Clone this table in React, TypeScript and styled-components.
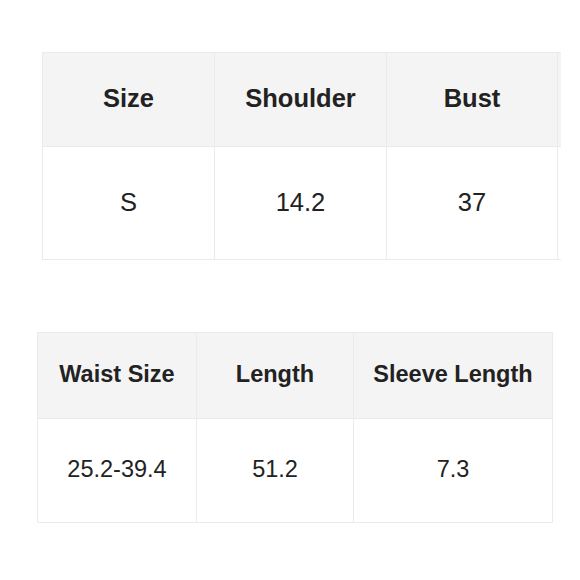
import React from "react";
import styled, { createGlobalStyle } from "styled-components";

type SizeTable = {
  headers: string[];
  values: string[];
  widths: number[];
};

const tables: SizeTable[] = [
  { headers: ["Size", "Shoulder", "Bust", ""], values: ["S", "14.2", "37", ""], widths: [172, 172, 171, 60] },
  { headers: ["Waist Size", "Length", "Sleeve Length"], values: ["25.2-39.4", "51.2", "7.3"], widths: [159, 157, 199] },
];

const GlobalStyle = createGlobalStyle`
  body {
    margin: 0;
    background: #ffffff;
    font-family: "Liberation Sans", Arial, sans-serif;
  }
`;

const Page = styled.div`
  width: 580px;
  height: 580px;
  padding-top: 52px;
  box-sizing: border-box;
  display: flex;
  flex-direction: column;
  gap: 72px;
  overflow: hidden;
`;

const Clip = styled.div<{ $left: number; $width: number }>`
  margin-left: ${(p) => p.$left}px;
  width: ${(p) => p.$width}px;
  overflow: hidden;
`;

const Table = styled.table<{ $size: number }>`
  border-collapse: collapse;
  table-layout: fixed;
  font-size: ${(p) => p.$size}px;
  color: #222222;
`;

const Head = styled.th<{ $h: number }>`
  height: ${(p) => p.$h}px;
  padding: 0 0 2px;
  background: #f4f4f4;
  border: 1.5px solid #ebebeb;
  font-weight: bold;
  text-align: center;
  white-space: nowrap;
  box-sizing: border-box;
`;

const Cell = styled.td<{ $h: number }>`
  height: ${(p) => p.$h}px;
  padding: 0 0 2px;
  background: #ffffff;
  border: 1.5px solid #ebebeb;
  text-align: center;
  white-space: nowrap;
  box-sizing: border-box;
`;

const layouts = [
  { left: 42, width: 519, size: 25.5, headH: 94, rowH: 113 },
  { left: 37, width: 516, size: 23.5, headH: 86, rowH: 104 },
];

export default function App() {
  return (
    <>
      <GlobalStyle />
      <Page>
        {tables.map((t, i) => {
          const l = layouts[i];
          return (
            <Clip key={i} $left={l.left} $width={l.width}>
              <Table $size={l.size} style={{ width: t.widths.reduce((a, b) => a + b, 0) }}>
                <colgroup>
                  {t.widths.map((w, j) => (
                    <col key={j} style={{ width: w }} />
                  ))}
                </colgroup>
                <thead>
                  <tr>
                    {t.headers.map((h, j) => (
                      <Head key={j} $h={l.headH}>
                        {h}
                      </Head>
                    ))}
                  </tr>
                </thead>
                <tbody>
                  <tr>
                    {t.values.map((v, j) => (
                      <Cell key={j} $h={l.rowH}>
                        {v}
                      </Cell>
                    ))}
                  </tr>
                </tbody>
              </Table>
            </Clip>
          );
        })}
      </Page>
    </>
  );
}
